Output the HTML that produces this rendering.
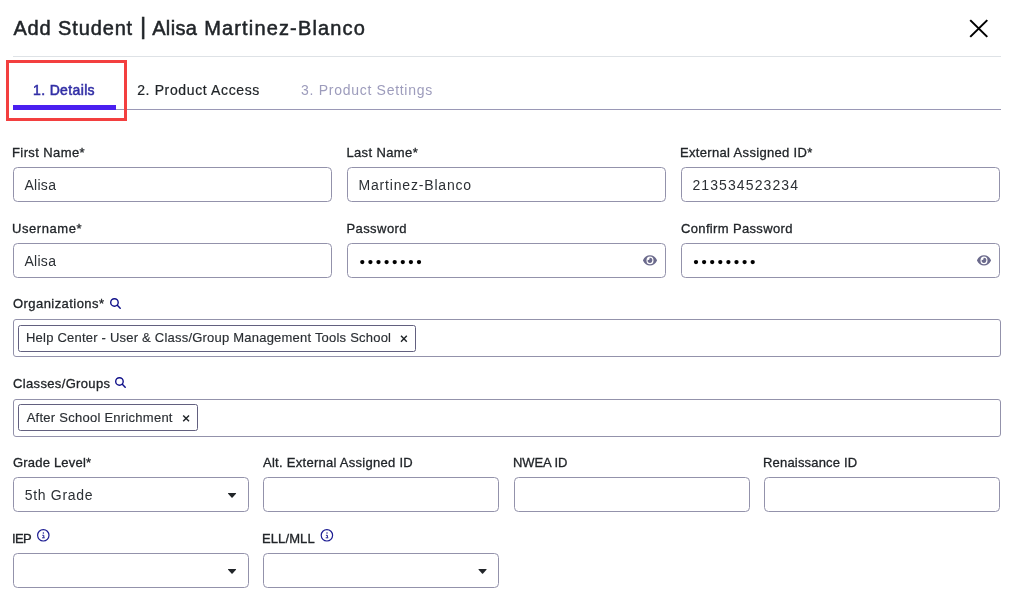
<!DOCTYPE html>
<html lang="en">
<head>
<meta charset="utf-8">
<title>Add Student</title>
<style>
*{box-sizing:border-box;margin:0;padding:0}
html,body{width:1014px;height:608px;background:#fff;overflow:hidden}
body{position:relative;font-family:"Liberation Sans",sans-serif;color:#212529}
.abs{position:absolute;white-space:nowrap}
.title{left:13px;top:15px;font-size:20px;line-height:24px;color:#212529;-webkit-text-stroke:0.5px #212529}
.hline{left:13px;top:56px;width:988px;height:1px;background:#dee2e6}
.tabline{left:13px;top:109px;width:988px;height:1px;background:#9a98b6}
.tabbar{left:13px;top:105px;width:103px;height:5px;background:#4a1ff0}
.redbox{left:6px;top:60px;width:121px;height:61px;border:3px solid #f33f3f}
.tab{top:82px;font-size:14px;line-height:16px}
.lbl{font-size:13px;line-height:16px;color:#212529;-webkit-text-stroke:0.3px #212529}
.inp{height:35px;border:1px solid #9392ab;border-radius:4.5px;background:#fff}
.val{font-size:14px;line-height:16px;color:#2c3035}
.box{left:13px;width:988px;height:38px;border:1px solid #9392ab;border-radius:3px}
.tag{height:27px;border:1px solid #62607f;border-radius:2.5px;background:#fff}
.tagt{font-size:13px;line-height:16px;color:#2a2e33;-webkit-text-stroke:0.15px #2a2e33}
svg{position:absolute;overflow:visible}
</style>
</head>
<body>
<div id="wrap" style="position:absolute;left:0;top:0;width:1014px;height:608px;will-change:transform">
<div class="abs title" id="title" style="left:13.4px"><span id="ta" style="letter-spacing:0.87px">Add Student</span><span id="tp" style="display:inline-block;font-size:24px;line-height:24px;width:19.1px;text-align:center;position:relative;left:0.4px;top:-1.2px">|</span><span id="tb1" style="letter-spacing:0.35px">Alisa</span> <span id="tb2" style="letter-spacing:1.15px;margin-left:1.4px">Martinez-Blanco</span></div>
<div class="abs hline"></div>

<div class="abs tabline"></div>
<div class="abs tabbar"></div>
<div class="abs tab" id="tab1" style="left:33px;color:#322fa6;-webkit-text-stroke:0.55px #322fa6;letter-spacing:0.36px">1. Details</div>
<div class="abs tab" id="tab2" style="left:137.2px;color:#212529;-webkit-text-stroke:0.2px #212529;letter-spacing:0.63px">2. Product Access</div>
<div class="abs tab" id="tab3" style="left:301.1px;color:#9d9cbc;letter-spacing:0.71px">3. Product Settings</div>
<div class="abs redbox"></div>

<!-- row 1 -->
<div class="abs lbl" id="l1" style="left:12px;top:145px;letter-spacing:0.4px">First Name*</div>
<div class="abs lbl" id="l2" style="left:346.4px;top:145px;letter-spacing:0.38px">Last Name*</div>
<div class="abs lbl" id="l3" style="left:680px;top:145px;letter-spacing:0.33px">External Assigned ID*</div>
<div class="abs inp" style="left:13px;top:167px;width:319px"></div>
<div class="abs inp" style="left:347px;top:167px;width:319px"></div>
<div class="abs inp" style="left:681px;top:167px;width:319px"></div>
<div class="abs val" id="v1" style="left:24.4px;top:177px;letter-spacing:0.3px">Alisa</div>
<div class="abs val" id="v2" style="left:358.5px;top:177px;letter-spacing:0.82px">Martinez-Blanco</div>
<div class="abs val" id="v3" style="left:692.4px;top:177px;letter-spacing:1.11px">213534523234</div>

<!-- row 2 -->
<div class="abs lbl" id="l4" style="left:12px;top:221px;letter-spacing:0.56px">Username*</div>
<div class="abs lbl" id="l5" style="left:346.4px;top:221px;letter-spacing:0.44px">Password</div>
<div class="abs lbl" id="l6" style="left:681px;top:221px;letter-spacing:0.35px">Confirm Password</div>
<div class="abs inp" style="left:13px;top:243px;width:319px"></div>
<div class="abs inp" style="left:347px;top:243px;width:319px"></div>
<div class="abs inp" style="left:681px;top:243px;width:319px"></div>
<div class="abs val" id="v4" style="left:24.4px;top:253px;letter-spacing:0.3px">Alisa</div>
<div class="abs lbl" id="l7" style="left:13px;top:295.5px;letter-spacing:0.44px">Organizations*</div>
<div class="abs box" style="top:319px"></div>
<div class="abs tag" style="left:18px;top:325px;width:398px"></div>
<div class="abs tagt" id="t1" style="left:26px;top:330px;letter-spacing:0.216px">Help Center - User &amp; Class/Group Management Tools School</div>
<div class="abs lbl" id="l8" style="left:13px;top:375.5px;letter-spacing:0.35px">Classes/Groups</div>
<div class="abs box" style="top:399px"></div>
<div class="abs tag" style="left:18px;top:404px;width:180px"></div>
<div class="abs tagt" id="t2" style="left:26.7px;top:409.5px;letter-spacing:0.255px">After School Enrichment</div>
<div class="abs lbl" id="l9" style="left:13px;top:455px;letter-spacing:0.2px">Grade Level*</div>
<div class="abs inp" style="left:13px;top:477px;width:236px"></div>
<div class="abs lbl" id="l10" style="left:263px;top:455px;letter-spacing:0.275px">Alt. External Assigned ID</div>
<div class="abs inp" style="left:263px;top:477px;width:236px"></div>
<div class="abs lbl" id="l11" style="left:513px;top:455px;letter-spacing:-0.08px">NWEA ID</div>
<div class="abs inp" style="left:514px;top:477px;width:236px"></div>
<div class="abs lbl" id="l12" style="left:763px;top:455px;letter-spacing:0.185px">Renaissance ID</div>
<div class="abs inp" style="left:764px;top:477px;width:236px"></div>
<div class="abs val" id="v5" style="left:24.7px;top:487px;letter-spacing:0.7px">5th Grade</div>
<div class="abs lbl" id="l13" style="left:12px;top:531px;letter-spacing:-0.7px">IEP</div>
<div class="abs lbl" id="l14" style="left:262px;top:531px;letter-spacing:0.1px">ELL/MLL</div>
<div class="abs inp" style="left:13px;top:553px;width:236px"></div>
<div class="abs inp" style="left:263px;top:553px;width:236px"></div>
<svg id="icons" style="left:0;top:0" width="1014" height="608" viewBox="0 0 1014 608">
<svg x="969.5" y="19.4" width="18.5" height="18.2" viewBox="0 0 18 18" preserveAspectRatio="none"><path d="M0.7 0.7L17.3 17.3M17.3 0.7L0.7 17.3" stroke="#000" stroke-width="2" fill="none"/></svg>
<svg x="643" y="253.55" width="14" height="13.7" viewBox="0 0 576 512" preserveAspectRatio="none"><path fill="#6b6a8c" d="M572.52 241.4C518.29 135.59 410.93 64 288 64S57.68 135.64 3.48 241.41a32.35 32.35 0 0 0 0 29.19C57.71 376.41 165.07 448 288 448s230.32-71.64 284.52-177.41a32.35 32.35 0 0 0 0-29.19zM288 400a144 144 0 1 1 144-144 143.93 143.93 0 0 1-144 144zm0-240a95.31 95.31 0 0 0-25.31 3.79 47.85 47.85 0 0 1-66.9 66.9A95.78 95.78 0 1 0 288 160z"/></svg>
<svg x="977" y="253.55" width="14" height="13.7" viewBox="0 0 576 512" preserveAspectRatio="none"><path fill="#6b6a8c" d="M572.52 241.4C518.29 135.59 410.93 64 288 64S57.68 135.64 3.48 241.41a32.35 32.35 0 0 0 0 29.19C57.71 376.41 165.07 448 288 448s230.32-71.64 284.52-177.41a32.35 32.35 0 0 0 0-29.19zM288 400a144 144 0 1 1 144-144 143.93 143.93 0 0 1-144 144zm0-240a95.31 95.31 0 0 0-25.31 3.79 47.85 47.85 0 0 1-66.9 66.9A95.78 95.78 0 1 0 288 160z"/></svg>
<svg x="110" y="298" width="11" height="11" viewBox="0 0 11 11"><circle cx="4.45" cy="4.45" r="3.75" fill="none" stroke="#11118a" stroke-width="1.4"/><path d="M7.3 7.3L10.2 10.2" stroke="#11118a" stroke-width="1.5" stroke-linecap="round"/></svg>
<svg x="400.4" y="335.25" width="7" height="7" viewBox="0 0 7 7"><path d="M0.6 0.6L6.4 6.4M6.4 0.6L0.6 6.4" stroke="#212529" stroke-width="1.45" fill="none"/></svg>
<svg x="115" y="377" width="11" height="11" viewBox="0 0 11 11"><circle cx="4.45" cy="4.45" r="3.75" fill="none" stroke="#11118a" stroke-width="1.4"/><path d="M7.3 7.3L10.2 10.2" stroke="#11118a" stroke-width="1.5" stroke-linecap="round"/></svg>
<svg x="182.6" y="414.9" width="7" height="7" viewBox="0 0 7 7"><path d="M0.6 0.6L6.4 6.4M6.4 0.6L0.6 6.4" stroke="#212529" stroke-width="1.45" fill="none"/></svg>
<svg x="227.5" y="492.55" width="9.1" height="5.6" viewBox="0 0 8.6 5.2" preserveAspectRatio="none"><path d="M0.9 0.4H7.7Q8.5 0.5 8 1.2L4.8 4.7Q4.3 5.1 3.8 4.7L0.6 1.2Q0.1 0.5 0.9 0.4Z" fill="#212529"/></svg>
<svg x="37" y="529" width="12.6" height="12.6" viewBox="0 0 12.6 12.6"><circle cx="6.3" cy="6.3" r="5.7" fill="none" stroke="#1c1c92" stroke-width="1.2"/><path d="M5.3 6.3H6.8V8.6M5.1 8.8H7.7" stroke="#1c1c92" stroke-width="1" fill="none"/><circle cx="6.4" cy="4" r="0.75" fill="#1c1c92"/></svg>
<svg x="320.6" y="529" width="12.6" height="12.6" viewBox="0 0 12.6 12.6"><circle cx="6.3" cy="6.3" r="5.7" fill="none" stroke="#1c1c92" stroke-width="1.2"/><path d="M5.3 6.3H6.8V8.6M5.1 8.8H7.7" stroke="#1c1c92" stroke-width="1" fill="none"/><circle cx="6.4" cy="4" r="0.75" fill="#1c1c92"/></svg>
<svg x="227.5" y="568.55" width="9.1" height="5.6" viewBox="0 0 8.6 5.2" preserveAspectRatio="none"><path d="M0.9 0.4H7.7Q8.5 0.5 8 1.2L4.8 4.7Q4.3 5.1 3.8 4.7L0.6 1.2Q0.1 0.5 0.9 0.4Z" fill="#212529"/></svg>
<svg x="478" y="568.55" width="9.1" height="5.6" viewBox="0 0 8.6 5.2" preserveAspectRatio="none"><path d="M0.9 0.4H7.7Q8.5 0.5 8 1.2L4.8 4.7Q4.3 5.1 3.8 4.7L0.6 1.2Q0.1 0.5 0.9 0.4Z" fill="#212529"/></svg>
<g fill="#000"><circle cx="362.3" cy="262.05" r="2.15"/><circle cx="370.4" cy="262.05" r="2.15"/><circle cx="378.5" cy="262.05" r="2.15"/><circle cx="386.6" cy="262.05" r="2.15"/><circle cx="394.7" cy="262.05" r="2.15"/><circle cx="402.8" cy="262.05" r="2.15"/><circle cx="410.9" cy="262.05" r="2.15"/><circle cx="419.0" cy="262.05" r="2.15"/></g>
<g fill="#000"><circle cx="696.0" cy="262.05" r="2.15"/><circle cx="704.1" cy="262.05" r="2.15"/><circle cx="712.2" cy="262.05" r="2.15"/><circle cx="720.3" cy="262.05" r="2.15"/><circle cx="728.4" cy="262.05" r="2.15"/><circle cx="736.5" cy="262.05" r="2.15"/><circle cx="744.6" cy="262.05" r="2.15"/><circle cx="752.7" cy="262.05" r="2.15"/></g>
</svg>
</div>
</body>
</html>
